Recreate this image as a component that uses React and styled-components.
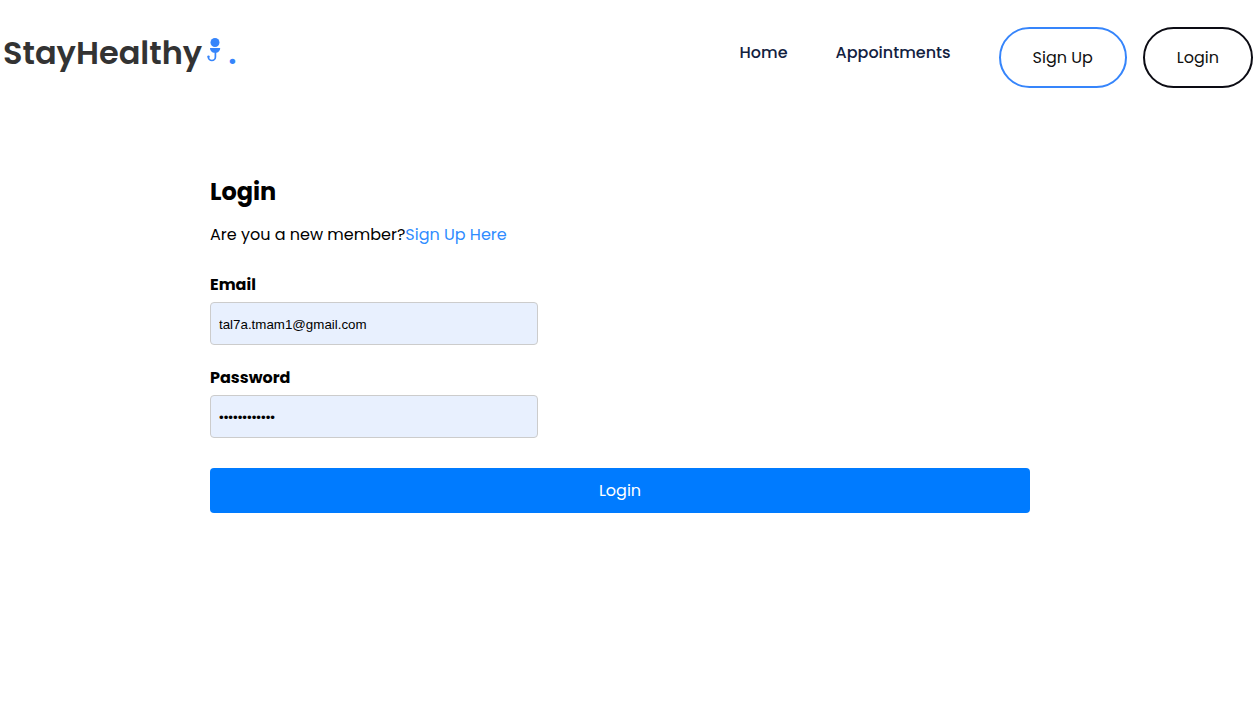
import React from "react";
import styled, { createGlobalStyle } from "styled-components";

const GlobalStyle = createGlobalStyle`
  * { box-sizing: border-box; }
  body {
    margin: 0;
    background: #fff;
    color: #000;
    font-family: Poppins, Inter, "Liberation Sans", sans-serif;
    font-size: 16px;
    line-height: 24px;
  }
`;

const Header = styled.header`
  display: flex;
  justify-content: space-between;
  align-items: flex-start;
  padding: 27px 4px 0 3px;
`;

const Logo = styled.a`
  display: flex;
  align-items: flex-start;
  padding-top: 2px;
  color: #333;
  font-size: 32px;
  font-weight: 600;
  line-height: 48px;
  text-decoration: none;
`;

const LogoIcon = styled.svg`
  width: 16px;
  height: 26px;
  margin: 8px 6px 0 4px;
`;

const LogoDot = styled.span`
  color: #3685fb;
`;

const Nav = styled.nav`
  display: flex;
  align-items: flex-start;
  gap: 48px;
`;

const NavLink = styled.a`
  padding-top: 14px;
  color: #12213f;
  font-weight: 500;
  text-decoration: none;
`;

const NavButtons = styled.div`
  display: flex;
  gap: 16px;
`;

const PillButton = styled.button`
  height: 61px;
  padding: 0 32px;
  border: 2px solid ${(p) => p.$border};
  border-radius: 32px;
  background: #fff;
  color: #101010;
  font: inherit;
  cursor: pointer;
`;

const Main = styled.main`
  padding: 86px 227px 48px 210px;
  @media (max-width: 900px) {
    padding: 48px 24px;
  }
`;

const Title = styled.h1`
  margin: 0;
  font-size: 24px;
  font-weight: 700;
  line-height: 36px;
`;

const Intro = styled.p`
  margin: 13px 0 26px;
`;

const SignUpLink = styled.a`
  color: #2f8cff;
  text-decoration: none;
`;

const Field = styled.div`
  display: flex;
  flex-direction: column;
  margin-bottom: 21px;
`;

const Label = styled.label`
  margin-bottom: 5px;
  font-weight: 700;
`;

const Input = styled.input`
  width: 40%;
  min-width: 240px;
  height: 43px;
  padding: 2px 8px 0;
  border: 1px solid #ccc;
  border-radius: 4px;
  background: #e8f0fe;
  color: #000;
  font-family: "Liberation Sans", Arial, sans-serif;
`;

const SubmitButton = styled.button`
  width: 100%;
  height: 45px;
  margin-top: 9px;
  border: 0;
  border-radius: 4px;
  background: #007bff;
  color: #fff;
  font: inherit;
  cursor: pointer;
`;

export default function App() {
  return (
    <>
      <GlobalStyle />
      <Header>
        <Logo href="#">
          <span>StayHealthy</span>
          <LogoIcon viewBox="0 0 16 26" aria-hidden="true">
            <circle cx="9" cy="5.5" r="4.5" fill="#3685fb" />
            <path d="M4 11h10.200c0 2.500-1.500 4.200-3.700 4.800H7.700C5.500 15.200 4 13.500 4 11z" fill="#3685fb" />
            <path d="M9.400 15V20a3.500 3.500 0 0 1-7 0" fill="none" stroke="#3685fb" strokeWidth="1.700" />
            <circle cx="2.500" cy="19.600" r="1.200" fill="#3685fb" />
          </LogoIcon>
          <LogoDot>.</LogoDot>
        </Logo>
        <Nav>
          <NavLink href="#">Home</NavLink>
          <NavLink href="#">Appointments</NavLink>
          <NavButtons>
            <PillButton type="button" $border="#3685fb">Sign Up</PillButton>
            <PillButton type="button" $border="#0c0c14">Login</PillButton>
          </NavButtons>
        </Nav>
      </Header>
      <Main>
        <Title>Login</Title>
        <Intro>
          Are you a new member?<SignUpLink href="#">Sign Up Here</SignUpLink>
        </Intro>
        <form onSubmit={(e) => e.preventDefault()}>
          <Field>
            <Label htmlFor="email">Email</Label>
            <Input id="email" type="email" defaultValue="tal7a.tmam1@gmail.com" />
          </Field>
          <Field>
            <Label htmlFor="password">Password</Label>
            <Input id="password" type="password" defaultValue="abcdefghijkl" />
          </Field>
          <SubmitButton type="submit">Login</SubmitButton>
        </form>
      </Main>
    </>
  );
}
